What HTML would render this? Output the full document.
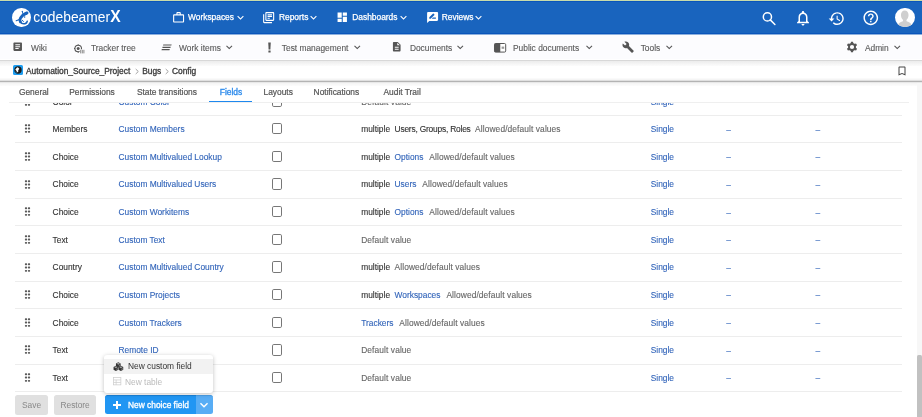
<!DOCTYPE html>
<html><head><meta charset="utf-8"><title>Fields</title>
<style>
*{box-sizing:border-box;margin:0;padding:0}
html,body{width:922px;height:417px;overflow:hidden;background:#fff;font-family:"Liberation Sans",sans-serif;position:relative}
#root{position:absolute;left:0;top:0;width:922px;height:417px;overflow:hidden;background:#fff;will-change:transform}
.a{position:absolute;white-space:nowrap;line-height:1}
.ic{position:absolute;overflow:visible}
#topline{position:absolute;left:0;top:0;width:922px;height:1px;background:#c8dbab}
#hdr{position:absolute;left:0;top:1px;width:922px;height:33px;background:#1964be;border-top:1px solid #0a55bb;border-bottom:1px solid #0a55bb}
#hdrfade{position:absolute;left:0;top:34px;width:922px;height:1px;background:#8db0dd}
.ht{color:#fff;font-size:8.4px;-webkit-text-stroke:.25px #fff}
#nav{position:absolute;left:0;top:35px;width:922px;height:24px;background:#fcfcfe}
.hl{position:absolute;left:0;width:922px;height:1px}
.nt{color:#5a5a5a;font-size:8.4px;-webkit-text-stroke:.12px #5a5a5a}
.bt{color:#3a3a3a;font-size:8.4px;-webkit-text-stroke:.3px #3a3a3a}
.tt{color:#555;font-size:8.4px;-webkit-text-stroke:.2px #555}
.tt.act{color:#2f8cec;-webkit-text-stroke:.35px #2f8cec}
.row{position:absolute;left:0;width:922px;height:27.65px}
.row span{position:absolute;top:1.2px;line-height:27.65px;font-size:8.4px;white-space:nowrap;color:#333;-webkit-text-stroke-width:.12px}
.row .ds span{position:static;margin-right:4.5px}
.ty{left:52.6px}
.nm{left:118.5px;color:#3365ba!important}
.ds{left:361.2px}
.row .l{color:#3365ba!important;margin-right:5.9px!important}
.row .g{color:#666!important;letter-spacing:.1px}
.row .u{letter-spacing:-.2px}
.sg{left:650.7px;color:#3365ba!important}
.dash{color:#3365ba!important;-webkit-text-stroke:.15px #3365ba;margin-top:.4px}
.row .cb{position:absolute;left:271.8px;top:8.2px;width:10.7px;height:11.2px;border:1.3px solid #777;border-radius:1.8px}
.sep2{position:absolute;left:15px;width:887px;height:1px;background:#ededed}
.row .dh{position:absolute;left:24px;top:9.3px}
#tabbar{position:absolute;left:9px;top:86px;width:900px;height:17px;background:#fff;border-bottom:1px solid #efefef}
#tabul{position:absolute;left:208.8px;top:100.6px;width:43.2px;height:1.9px;background:#1e88ee}
.btn{top:394.6px;height:20px;line-height:20px;text-align:center;background:#e0e0e0;border-radius:2.5px;color:#888;font-size:8.4px}
#bluebtn{left:104.5px;top:394.8px;width:91.5px;height:19.7px;background:#2196f3;border-radius:2.5px 0 0 2.5px;border-top:1px solid #1b85dc}
#bluedd{left:196px;top:394.8px;width:17.2px;height:19.7px;background:#58adf5;border-radius:0 2.5px 2.5px 0;border-top:1px solid #4ca0e8}
.bbt{color:#fff;font-size:8.4px;-webkit-text-stroke:.3px #fff}
#popup{left:104px;top:355.2px;width:109.2px;height:37.7px;background:#fff;border-radius:3px;box-shadow:0 1px 4px rgba(0,0,0,.25)}
#pophl{position:absolute;left:0;top:3.6px;width:100%;height:15.2px;background:#f2f2f2}
.pt{color:#333;font-size:8.4px}
#sb{position:absolute;left:916.5px;top:83px;width:5.5px;height:334px;background:#f7f7f7}
#sbthumb{position:absolute;left:917px;top:355px;width:5px;height:62px;background:#c1c1c1;border-radius:1.5px 1.5px 0 0}
</style></head><body><div id="root">
<div id="topline"></div><div id="hdr"></div><div id="hdrfade"></div>
<div class="a" style="left:12.2px;top:7.6px;width:18.9px;height:19.6px;border-radius:50%;background:#fff"></div>
<svg class="ic" style="left:10.5px;top:5.8px" width="22" height="23" viewBox="0 0 22 23"><g fill="none" stroke="#1964be" stroke-linecap="round" stroke-linejoin="round"><path d="M15.2 7.3 C13.2 8 10.5 10 9.3 12.4 C8.6 13.6 8.6 14.8 9.4 15.8" stroke-width="2.9"/><path d="M9.4 15.8 C10.2 17.2 12 18 14 17.6 C15.2 17.3 16 16.5 16.2 15.3" stroke-width="1.6"/><path d="M12.2 8.6 L11.3 5.5" stroke-width="1"/><path d="M9 13.2 L5.2 14.7" stroke-width="1.1"/><path d="M11.3 14.2 L12.4 15.5" stroke-width="1"/></g><g fill="#1964be"><ellipse cx="15.3" cy="7.2" rx="2.3" ry="1.6" transform="rotate(-20 15.3 7.2)"/><circle cx="13.6" cy="11.1" r=".75"/><circle cx="11.3" cy="5.3" r=".6"/></g></svg>
<div class="a " style="left:33.3px;top:8.9px;color:#fff;font-size:13.8px">codebeamer<span style="font-weight:bold;font-size:15.6px;margin-left:.2px">X</span></div>
<svg class="ic" style="left:171.5px;top:10.5px" width="13.2" height="13.2" viewBox="0 0 24 24" ><g fill="#fff"><path d="M14 6V4h-4v2h4zM4 8v11h16V8H4zm16-2c1.11 0 2 .89 2 2v11c0 1.11-.89 2-2 2H4c-1.11 0-2-.89-2-2l.01-11c0-1.11.88-2 1.99-2h4V4c0-1.11.89-2 2-2h4c1.11 0 2 .89 2 2v2h4z"/></g></svg>
<div class="a ht" style="left:188px;top:13.1px;">Workspaces</div>
<svg class="ic" style="left:233.75px;top:11.25px" width="13" height="13" viewBox="0 0 24 24" ><g fill="#fff"><path d="M16.59 8.59L12 13.17 7.41 8.59 6 10l6 6 6-6z"/></g></svg>
<svg class="ic" style="left:262.3px;top:10.9px" width="13.3" height="13.3" viewBox="0 0 24 24" ><g fill="#fff"><path d="M4 6H2v14c0 1.1.9 2 2 2h14v-2H4V6zm16-4H8c-1.1 0-2 .9-2 2v12c0 1.1.9 2 2 2h12c1.1 0 2-.9 2-2V4c0-1.1-.9-2-2-2zm0 14H8V4h12v12zM10 9h8v2h-8zm0 3h4v2h-4zm0-6h8v2h-8z"/></g></svg>
<div class="a ht" style="left:279px;top:13.1px;">Reports</div>
<svg class="ic" style="left:307.45px;top:11.25px" width="13" height="13" viewBox="0 0 24 24" ><g fill="#fff"><path d="M16.59 8.59L12 13.17 7.41 8.59 6 10l6 6 6-6z"/></g></svg>
<svg class="ic" style="left:336px;top:11.3px" width="12.5" height="12.5" viewBox="0 0 24 24" ><g fill="#fff"><path d="M3 13h8V3H3v10zm0 8h8v-6H3v6zm10 0h8V11h-8v10zm0-18v6h8V3h-8z"/></g></svg>
<div class="a ht" style="left:352.3px;top:13.1px;">Dashboards</div>
<svg class="ic" style="left:396.75px;top:11.25px" width="13" height="13" viewBox="0 0 24 24" ><g fill="#fff"><path d="M16.59 8.59L12 13.17 7.41 8.59 6 10l6 6 6-6z"/></g></svg>
<svg class="ic" style="left:425.6px;top:10.8px" width="13.2" height="13.2" viewBox="0 0 24 24" ><g fill="#fff"><path d="M20 2H4c-1.1 0-1.99.9-1.99 2L2 22l4-4h14c1.1 0 2-.9 2-2V4c0-1.1-.9-2-2-2zM6 14v-2.47l6.88-6.88c.2-.2.51-.2.71 0l1.77 1.77c.2.2.2.51 0 .71L8.47 14H6zm12 0h-7.5l2-2H18v2z"/></g></svg>
<div class="a ht" style="left:441.8px;top:13.1px;">Reviews</div>
<svg class="ic" style="left:472.05px;top:11.25px" width="13" height="13" viewBox="0 0 24 24" ><g fill="#fff"><path d="M16.59 8.59L12 13.17 7.41 8.59 6 10l6 6 6-6z"/></g></svg>
<svg class="ic" style="left:760px;top:9.5px" width="17" height="17" viewBox="0 0 17 17" ><g fill="none" stroke="#fff" stroke-width="1.5"><circle cx="7.4" cy="6.9" r="4.1"/><path d="M10.3 9.9l4.6 4.6" stroke-linecap="round"/></g></svg>
<svg class="ic" style="left:794px;top:9.2px" width="18" height="18" viewBox="0 0 24 24" ><g fill="#fff"><path d="M12 22c1.1 0 2-.9 2-2h-4c0 1.1.89 2 2 2zm6-6v-5c0-3.07-1.64-5.64-4.5-6.32V4c0-.83-.67-1.5-1.5-1.5s-1.5.67-1.5 1.5v.68C7.63 5.36 6 7.92 6 11v5l-2 2v1h16v-1l-2-2zm-2 1H8v-6c0-2.48 1.51-4.5 4-4.5s4 2.02 4 4.5v6z"/></g></svg>
<svg class="ic" style="left:827.5px;top:9.6px" width="17.2" height="17.2" viewBox="0 0 24 24" ><g fill="#fff"><path d="M13 3c-4.97 0-9 4.03-9 9H1l3.89 3.89.07.14L9 12H6c0-3.87 3.13-7 7-7s7 3.13 7 7-3.13 7-7 7c-1.93 0-3.68-.79-4.94-2.06l-1.42 1.42C8.27 19.99 10.51 21 13 21c4.97 0 9-4.03 9-9s-4.03-9-9-9zm-1 5v5l4.28 2.54.72-1.21-3.5-2.08V8H12z"/></g></svg>
<svg class="ic" style="left:862.3px;top:9.2px" width="17.6" height="17.6" viewBox="0 0 24 24" ><g fill="#fff"><path d="M11 18h2v-2h-2v2zm1-16C6.48 2 2 6.48 2 12s4.48 10 10 10 10-4.48 10-10S17.52 2 12 2zm0 18c-4.41 0-8-3.59-8-8s3.59-8 8-8 8 3.59 8 8-3.59 8-8 8zm0-14c-2.21 0-4 1.79-4 4h2c0-1.1.9-2 2-2s2 .9 2 2c0 2-3 1.75-3 5h2c0-2.25 3-2.5 3-5 0-2.21-1.79-4-4-4z"/></g></svg>
<div class="a" style="left:895px;top:7.8px;width:19.5px;height:19.5px;border-radius:50%;background:#fff;overflow:hidden"><svg width="19.5" height="19.5" viewBox="0 0 20 20" style="position:absolute;left:0;top:0"><g fill="#cfcfcf"><path d="M10 2.6c2.3 0 3.9 1.9 3.9 4.6 0 2.2-.9 4.1-2.2 5l.2 1.3c2.9.6 5.3 2.4 5.6 5.5L17.6 20H2.4l.1-1c.3-3.1 2.7-4.9 5.6-5.5l.2-1.3c-1.3-.9-2.2-2.8-2.2-5 0-2.7 1.6-4.6 3.9-4.6z"/></g></svg></div>
<div id="nav"></div><div class="hl" style="top:60px;background:#d8d8d8"></div><div class="hl" style="top:61px;height:5px;background:linear-gradient(#ececec,#fcfcfc)"></div>
<svg class="ic" style="left:12.3px;top:41px" width="11.4" height="11.4" viewBox="0 0 24 24" ><g fill="#555"><path d="M19 3H5c-1.1 0-2 .9-2 2v14c0 1.1.9 2 2 2h14c1.1 0 2-.9 2-2V5c0-1.1-.9-2-2-2zm-5 14H7v-2h7v2zm3-4H7v-2h10v2zm0-4H7V7h10v2z"/></g></svg>
<div class="a nt" style="left:31px;top:43.5px;">Wiki</div>
<svg class="ic" style="left:72.5px;top:43.5px" width="12" height="11" viewBox="0 0 12 11" ><circle cx="5.2" cy="4.5" r="3.3" fill="none" stroke="#555" stroke-width="1.1"/><circle cx="5.2" cy="4.5" r="1.5" fill="#555"/><path d="M5.2 0.3v1M1 4.5h1M5.2 7.8v1" stroke="#555" stroke-width="1"/><rect x="6.6" y="5.3" width="4.9" height="4.4" fill="#fcfcfe"/><g fill="#8a8a8a"><rect x="7.2" y="5.8" width="1" height="3.6"/><rect x="8.8" y="5.8" width="1" height="3.6"/><rect x="10.4" y="5.8" width="1" height="3.6"/></g></svg>
<div class="a nt" style="left:90.9px;top:43.5px;">Tracker tree</div>
<svg class="ic" style="left:161px;top:44.1px" width="11" height="7" viewBox="0 0 11 7" ><g fill="#555"><path d="M2.3 .5h8.4l-.4 1.1H2z"/><path d="M1.6 2.8h8.2l-.4 1.1H1.3z"/><path d="M.8 5.1h8l-.4 1.1H.5z"/></g></svg>
<div class="a nt" style="left:179.1px;top:43.5px;">Work items</div>
<svg class="ic" style="left:222.7px;top:40.6px" width="12.5" height="12.5" viewBox="0 0 24 24" ><g fill="#555"><path d="M16.59 8.59L12 13.17 7.41 8.59 6 10l6 6 6-6z"/></g></svg>
<svg class="ic" style="left:266.5px;top:41.6px" width="5" height="11" viewBox="0 0 5 11" ><g fill="#555"><path d="M1.25 .6h2.5l-.35 7H1.6z"/><rect x="1.4" y="8.5" width="2.2" height="2.1" rx=".3"/></g></svg>
<div class="a nt" style="left:281.8px;top:43.5px;">Test management</div>
<svg class="ic" style="left:351.2px;top:40.6px" width="12.5" height="12.5" viewBox="0 0 24 24" ><g fill="#555"><path d="M16.59 8.59L12 13.17 7.41 8.59 6 10l6 6 6-6z"/></g></svg>
<svg class="ic" style="left:391px;top:40.8px" width="11.5" height="11.5" viewBox="0 0 24 24" ><g fill="#555"><path d="M14 2H6c-1.1 0-1.99.9-1.99 2L4 20c0 1.1.89 2 1.99 2H18c1.1 0 2-.9 2-2V8l-6-6zm2 16H8v-2h8v2zm0-4H8v-2h8v2zm-3-5V3.5L18.5 9H13z"/></g></svg>
<div class="a nt" style="left:409.9px;top:43.5px;">Documents</div>
<svg class="ic" style="left:454.1px;top:40.6px" width="12.5" height="12.5" viewBox="0 0 24 24" ><g fill="#555"><path d="M16.59 8.59L12 13.17 7.41 8.59 6 10l6 6 6-6z"/></g></svg>
<svg class="ic" style="left:494px;top:42.6px" width="12.2" height="9.6" viewBox="0 0 12.2 9.6" ><rect x=".5" y=".5" width="11.2" height="8.6" rx="1.2" fill="#fff" stroke="#555" stroke-width="1"/><rect x=".5" y=".5" width="5.8" height="8.6" fill="#555"/><rect x="7.6" y="3.6" width="2.6" height="2.2" fill="#999"/></svg>
<div class="a nt" style="left:513px;top:43.5px;">Public documents</div>
<svg class="ic" style="left:582.5px;top:40.6px" width="12.5" height="12.5" viewBox="0 0 24 24" ><g fill="#555"><path d="M16.59 8.59L12 13.17 7.41 8.59 6 10l6 6 6-6z"/></g></svg>
<svg class="ic" style="left:621.5px;top:40.8px" width="12.3" height="12.3" viewBox="0 0 24 24" ><g fill="#555" transform="translate(0,0)"><path d="M22.7 19l-9.1-9.1c.9-2.3.4-5-1.5-6.9-2-2-5-2.4-7.4-1.3L9 6 6 9 1.6 4.7C.4 7.1.9 10.1 2.9 12.1c1.9 1.9 4.6 2.4 6.9 1.5l9.1 9.1c.4.4 1 .4 1.4 0l2.3-2.3c.5-.4.5-1.1.1-1.4z"/></g></svg>
<div class="a nt" style="left:640.7px;top:43.5px;">Tools</div>
<svg class="ic" style="left:663.2px;top:40.6px" width="12.5" height="12.5" viewBox="0 0 24 24" ><g fill="#555"><path d="M16.59 8.59L12 13.17 7.41 8.59 6 10l6 6 6-6z"/></g></svg>
<svg class="ic" style="left:846px;top:40.9px" width="12" height="12" viewBox="-6 -6 12 12" ><g fill="#555"><rect x="-1.15" y="-5.3" width="2.3" height="2.2" rx=".4" transform="rotate(0)"/><rect x="-1.15" y="-5.3" width="2.3" height="2.2" rx=".4" transform="rotate(60)"/><rect x="-1.15" y="-5.3" width="2.3" height="2.2" rx=".4" transform="rotate(120)"/><rect x="-1.15" y="-5.3" width="2.3" height="2.2" rx=".4" transform="rotate(180)"/><rect x="-1.15" y="-5.3" width="2.3" height="2.2" rx=".4" transform="rotate(240)"/><rect x="-1.15" y="-5.3" width="2.3" height="2.2" rx=".4" transform="rotate(300)"/></g><circle r="3.05" fill="none" stroke="#555" stroke-width="1.9"/></svg>
<div class="a nt" style="left:864.9px;top:43.5px;">Admin</div>
<svg class="ic" style="left:890.8px;top:40.6px" width="12.5" height="12.5" viewBox="0 0 24 24" ><g fill="#555"><path d="M16.59 8.59L12 13.17 7.41 8.59 6 10l6 6 6-6z"/></g></svg>
<div class="hl" style="top:78px;background:#fafafa"></div><div class="hl" style="top:79px;background:#f5f5f5"></div><div class="hl" style="top:80px;background:#e0e0e0"></div><div class="hl" style="top:81px;background:#b3b3b3"></div><div class="hl" style="top:82px;background:#e8e8e8"></div><div class="hl" style="top:83px;height:3px;background:linear-gradient(#f4f4f4,#fcfcfc)"></div>
<div class="a" style="left:13.3px;top:65.4px;width:9.8px;height:9.8px;background:#1e9df0;border-radius:1.5px"></div>
<svg class="ic" style="left:14.2px;top:66.3px" width="8" height="8" viewBox="0 0 8 8" ><circle cx="4" cy="4" r="3.7" fill="#1a1a1a"/><path d="M3.2 1.2c.8.3 1.6.6 2 1.4.1.8-.4 1.3-1 1.4l.2 1.4L3 6.5 2.6 5 1.3 3.6z" fill="#fff"/><path d="M1 5.6c.5.6 1 1 1.8 1.2" stroke="#1e9df0" stroke-width=".5" fill="none"/></svg>
<div class="a bt" style="left:26px;top:67.2px;">Automation_Source_Project</div>
<svg class="ic" style="left:133.8px;top:68px" width="6" height="7" viewBox="0 0 6 7" ><path d="M1.7 1l2.6 2.5-2.6 2.5" fill="none" stroke="#999" stroke-width=".9"/></svg>
<div class="a bt" style="left:142.2px;top:67.2px;">Bugs</div>
<svg class="ic" style="left:163.6px;top:68px" width="6" height="7" viewBox="0 0 6 7" ><path d="M1.7 1l2.6 2.5-2.6 2.5" fill="none" stroke="#999" stroke-width=".9"/></svg>
<div class="a bt" style="left:172px;top:67.2px;">Config</div>
<svg class="ic" style="left:895.5px;top:64.5px" width="12" height="12" viewBox="0 0 24 24" ><g fill="#444"><path d="M17 3H7c-1.1 0-1.99.9-1.99 2L5 21l7-3 7 3V5c0-1.1-.9-2-2-2zm0 15l-5-2.18L7 18V5h10v13z"/></g></svg>
<div class="row" style="top:87.35px"><svg class="dh" width="8" height="10" viewBox="0 0 8 10"><g fill="#5a5a5a"><rect x=".9" y=".3" width="2.2" height="1.9" rx=".7"/><rect x="3.9" y=".3" width="2.2" height="1.9" rx=".7"/><rect x=".9" y="3.6" width="2.2" height="1.9" rx=".7"/><rect x="3.9" y="3.6" width="2.2" height="1.9" rx=".7"/><rect x=".9" y="6.9" width="2.2" height="1.9" rx=".7"/><rect x="3.9" y="6.9" width="2.2" height="1.9" rx=".7"/></g></svg><span class="ty">Color</span><span class="nm">Custom Color</span><i class="cb"></i><span class="ds"><span class="g">Default value</span></span><span class="sg">Single</span></div>
<div class="sep2" style="top:115px"></div>
<div class="row" style="top:115.00px"><svg class="dh" width="8" height="10" viewBox="0 0 8 10"><g fill="#5a5a5a"><rect x=".9" y=".3" width="2.2" height="1.9" rx=".7"/><rect x="3.9" y=".3" width="2.2" height="1.9" rx=".7"/><rect x=".9" y="3.6" width="2.2" height="1.9" rx=".7"/><rect x="3.9" y="3.6" width="2.2" height="1.9" rx=".7"/><rect x=".9" y="6.9" width="2.2" height="1.9" rx=".7"/><rect x="3.9" y="6.9" width="2.2" height="1.9" rx=".7"/></g></svg><span class="ty">Members</span><span class="nm">Custom Members</span><i class="cb"></i><span class="ds"><span class="d">multiple</span><span class="d u">Users, Groups, Roles</span><span class="g">Allowed/default values</span></span><span class="sg">Single</span><span class="dash" style="left:726.3px">&ndash;</span><span class="dash" style="left:815.6px">&ndash;</span></div>
<div class="sep2" style="top:142px"></div>
<div class="row" style="top:142.65px"><svg class="dh" width="8" height="10" viewBox="0 0 8 10"><g fill="#5a5a5a"><rect x=".9" y=".3" width="2.2" height="1.9" rx=".7"/><rect x="3.9" y=".3" width="2.2" height="1.9" rx=".7"/><rect x=".9" y="3.6" width="2.2" height="1.9" rx=".7"/><rect x="3.9" y="3.6" width="2.2" height="1.9" rx=".7"/><rect x=".9" y="6.9" width="2.2" height="1.9" rx=".7"/><rect x="3.9" y="6.9" width="2.2" height="1.9" rx=".7"/></g></svg><span class="ty">Choice</span><span class="nm">Custom Multivalued Lookup</span><i class="cb"></i><span class="ds"><span class="d">multiple</span><span class="l">Options</span><span class="g">Allowed/default values</span></span><span class="sg">Single</span><span class="dash" style="left:726.3px">&ndash;</span><span class="dash" style="left:815.6px">&ndash;</span></div>
<div class="sep2" style="top:170px"></div>
<div class="row" style="top:170.30px"><svg class="dh" width="8" height="10" viewBox="0 0 8 10"><g fill="#5a5a5a"><rect x=".9" y=".3" width="2.2" height="1.9" rx=".7"/><rect x="3.9" y=".3" width="2.2" height="1.9" rx=".7"/><rect x=".9" y="3.6" width="2.2" height="1.9" rx=".7"/><rect x="3.9" y="3.6" width="2.2" height="1.9" rx=".7"/><rect x=".9" y="6.9" width="2.2" height="1.9" rx=".7"/><rect x="3.9" y="6.9" width="2.2" height="1.9" rx=".7"/></g></svg><span class="ty">Choice</span><span class="nm">Custom Multivalued Users</span><i class="cb"></i><span class="ds"><span class="d">multiple</span><span class="l">Users</span><span class="g">Allowed/default values</span></span><span class="sg">Single</span><span class="dash" style="left:726.3px">&ndash;</span><span class="dash" style="left:815.6px">&ndash;</span></div>
<div class="sep2" style="top:198px"></div>
<div class="row" style="top:197.95px"><svg class="dh" width="8" height="10" viewBox="0 0 8 10"><g fill="#5a5a5a"><rect x=".9" y=".3" width="2.2" height="1.9" rx=".7"/><rect x="3.9" y=".3" width="2.2" height="1.9" rx=".7"/><rect x=".9" y="3.6" width="2.2" height="1.9" rx=".7"/><rect x="3.9" y="3.6" width="2.2" height="1.9" rx=".7"/><rect x=".9" y="6.9" width="2.2" height="1.9" rx=".7"/><rect x="3.9" y="6.9" width="2.2" height="1.9" rx=".7"/></g></svg><span class="ty">Choice</span><span class="nm">Custom Workitems</span><i class="cb"></i><span class="ds"><span class="d">multiple</span><span class="l">Options</span><span class="g">Allowed/default values</span></span><span class="sg">Single</span><span class="dash" style="left:726.3px">&ndash;</span><span class="dash" style="left:815.6px">&ndash;</span></div>
<div class="sep2" style="top:225px"></div>
<div class="row" style="top:225.60px"><svg class="dh" width="8" height="10" viewBox="0 0 8 10"><g fill="#5a5a5a"><rect x=".9" y=".3" width="2.2" height="1.9" rx=".7"/><rect x="3.9" y=".3" width="2.2" height="1.9" rx=".7"/><rect x=".9" y="3.6" width="2.2" height="1.9" rx=".7"/><rect x="3.9" y="3.6" width="2.2" height="1.9" rx=".7"/><rect x=".9" y="6.9" width="2.2" height="1.9" rx=".7"/><rect x="3.9" y="6.9" width="2.2" height="1.9" rx=".7"/></g></svg><span class="ty">Text</span><span class="nm">Custom Text</span><i class="cb"></i><span class="ds"><span class="g">Default value</span></span><span class="sg">Single</span><span class="dash" style="left:726.3px">&ndash;</span><span class="dash" style="left:815.6px">&ndash;</span></div>
<div class="sep2" style="top:253px"></div>
<div class="row" style="top:253.25px"><svg class="dh" width="8" height="10" viewBox="0 0 8 10"><g fill="#5a5a5a"><rect x=".9" y=".3" width="2.2" height="1.9" rx=".7"/><rect x="3.9" y=".3" width="2.2" height="1.9" rx=".7"/><rect x=".9" y="3.6" width="2.2" height="1.9" rx=".7"/><rect x="3.9" y="3.6" width="2.2" height="1.9" rx=".7"/><rect x=".9" y="6.9" width="2.2" height="1.9" rx=".7"/><rect x="3.9" y="6.9" width="2.2" height="1.9" rx=".7"/></g></svg><span class="ty">Country</span><span class="nm">Custom Multivalued Country</span><i class="cb"></i><span class="ds"><span class="d">multiple</span><span class="g">Allowed/default values</span></span><span class="sg">Single</span><span class="dash" style="left:726.3px">&ndash;</span><span class="dash" style="left:815.6px">&ndash;</span></div>
<div class="sep2" style="top:281px"></div>
<div class="row" style="top:280.90px"><svg class="dh" width="8" height="10" viewBox="0 0 8 10"><g fill="#5a5a5a"><rect x=".9" y=".3" width="2.2" height="1.9" rx=".7"/><rect x="3.9" y=".3" width="2.2" height="1.9" rx=".7"/><rect x=".9" y="3.6" width="2.2" height="1.9" rx=".7"/><rect x="3.9" y="3.6" width="2.2" height="1.9" rx=".7"/><rect x=".9" y="6.9" width="2.2" height="1.9" rx=".7"/><rect x="3.9" y="6.9" width="2.2" height="1.9" rx=".7"/></g></svg><span class="ty">Choice</span><span class="nm">Custom Projects</span><i class="cb"></i><span class="ds"><span class="d">multiple</span><span class="l">Workspaces</span><span class="g">Allowed/default values</span></span><span class="sg">Single</span><span class="dash" style="left:726.3px">&ndash;</span><span class="dash" style="left:815.6px">&ndash;</span></div>
<div class="sep2" style="top:308px"></div>
<div class="row" style="top:308.55px"><svg class="dh" width="8" height="10" viewBox="0 0 8 10"><g fill="#5a5a5a"><rect x=".9" y=".3" width="2.2" height="1.9" rx=".7"/><rect x="3.9" y=".3" width="2.2" height="1.9" rx=".7"/><rect x=".9" y="3.6" width="2.2" height="1.9" rx=".7"/><rect x="3.9" y="3.6" width="2.2" height="1.9" rx=".7"/><rect x=".9" y="6.9" width="2.2" height="1.9" rx=".7"/><rect x="3.9" y="6.9" width="2.2" height="1.9" rx=".7"/></g></svg><span class="ty">Choice</span><span class="nm">Custom Trackers</span><i class="cb"></i><span class="ds"><span class="l">Trackers</span><span class="g">Allowed/default values</span></span><span class="sg">Single</span><span class="dash" style="left:726.3px">&ndash;</span><span class="dash" style="left:815.6px">&ndash;</span></div>
<div class="sep2" style="top:336px"></div>
<div class="row" style="top:336.20px"><svg class="dh" width="8" height="10" viewBox="0 0 8 10"><g fill="#5a5a5a"><rect x=".9" y=".3" width="2.2" height="1.9" rx=".7"/><rect x="3.9" y=".3" width="2.2" height="1.9" rx=".7"/><rect x=".9" y="3.6" width="2.2" height="1.9" rx=".7"/><rect x="3.9" y="3.6" width="2.2" height="1.9" rx=".7"/><rect x=".9" y="6.9" width="2.2" height="1.9" rx=".7"/><rect x="3.9" y="6.9" width="2.2" height="1.9" rx=".7"/></g></svg><span class="ty">Text</span><span class="nm">Remote ID</span><i class="cb"></i><span class="ds"><span class="g">Default value</span></span><span class="sg">Single</span><span class="dash" style="left:726.3px">&ndash;</span><span class="dash" style="left:815.6px">&ndash;</span></div>
<div class="sep2" style="top:364px"></div>
<div class="row" style="top:363.85px"><svg class="dh" width="8" height="10" viewBox="0 0 8 10"><g fill="#5a5a5a"><rect x=".9" y=".3" width="2.2" height="1.9" rx=".7"/><rect x="3.9" y=".3" width="2.2" height="1.9" rx=".7"/><rect x=".9" y="3.6" width="2.2" height="1.9" rx=".7"/><rect x="3.9" y="3.6" width="2.2" height="1.9" rx=".7"/><rect x=".9" y="6.9" width="2.2" height="1.9" rx=".7"/><rect x="3.9" y="6.9" width="2.2" height="1.9" rx=".7"/></g></svg><span class="ty">Text</span><span class="nm">Remote Name</span><i class="cb"></i><span class="ds"><span class="g">Default value</span></span><span class="sg">Single</span><span class="dash" style="left:726.3px">&ndash;</span><span class="dash" style="left:815.6px">&ndash;</span></div>
<div class="sep2" style="top:391px"></div>
<div id="tabbar"></div><div id="tabul"></div>
<div class="a tt" style="left:18.9px;top:87.7px;">General</div>
<div class="a tt" style="left:69.2px;top:87.7px;">Permissions</div>
<div class="a tt" style="left:136.9px;top:87.7px;">State transitions</div>
<div class="a tt act" style="left:219.8px;top:87.7px;">Fields</div>
<div class="a tt" style="left:263.5px;top:87.7px;">Layouts</div>
<div class="a tt" style="left:313.6px;top:87.7px;">Notifications</div>
<div class="a tt" style="left:383.5px;top:87.7px;">Audit Trail</div>
<div class="a btn" style="left:15px;width:33px;">Save</div>
<div class="a btn" style="left:54.4px;width:41.4px;">Restore</div>
<div class="a" id="bluebtn"></div><div class="a" id="bluedd"></div>
<div class="a" style="left:113px;top:404.2px;width:7.9px;height:1.4px;background:#fff"></div><div class="a" style="left:116.3px;top:400.9px;width:1.4px;height:7.9px;background:#fff"></div>
<div class="a bbt" style="left:128px;top:400.8px;">New choice field</div>
<svg class="ic" style="left:195.8px;top:396.7px" width="16" height="16" viewBox="0 0 24 24" ><g fill="#fff"><path d="M16.59 8.59L12 13.17 7.41 8.59 6 10l6 6 6-6z"/></g></svg>
<div class="a" id="popup"><div id="pophl"></div></div>
<svg class="ic" style="left:112.6px;top:362.2px" width="11" height="9.5" viewBox="0 0 11 9.5" ><path d="M5.3 0.19999999999999973L7.64 1.5499999999999998L7.64 4.25L5.3 5.6L2.96 4.25L2.96 1.5499999999999998z" fill="#333"/><path d="M5.3 0.8999999999999997L7.04 1.5499999999999998L5.3 2.6999999999999997L3.56 1.5499999999999998z" fill="#aaa"/><path d="M5.8 3.1999999999999997L7.14 2.15L7.14 4.05L5.8 5.0z" fill="#777"/><path d="M2.9 3.7L5.24 5.050000000000001L5.24 7.75L2.9 9.100000000000001L0.56 7.75L0.56 5.050000000000001z" fill="#333"/><path d="M2.9 4.4L4.64 5.050000000000001L2.9 6.2L1.16 5.050000000000001z" fill="#aaa"/><path d="M3.4 6.7L4.74 5.65L4.74 7.55L3.4 8.500000000000002z" fill="#777"/><path d="M7.9 3.7L10.24 5.050000000000001L10.24 7.75L7.9 9.100000000000001L5.56 7.75L5.56 5.050000000000001z" fill="#333"/><path d="M7.9 4.4L9.64 5.050000000000001L7.9 6.2L6.16 5.050000000000001z" fill="#aaa"/><path d="M8.4 6.7L9.74 5.65L9.74 7.55L8.4 8.500000000000002z" fill="#777"/></svg>
<div class="a pt" style="left:128px;top:362.1px;">New custom field</div>
<svg class="ic" style="left:112.8px;top:377.3px" width="8.4" height="8.4" viewBox="0 0 8 8" ><g fill="none" stroke="#ccc" stroke-width=".7"><rect x=".5" y=".5" width="7" height="7"/><path d="M.5 2.8h7M.5 5.2h7M3 2.8v4.7"/></g></svg>
<div class="a pt" style="left:125px;top:377.9px;color:#bbb">New table</div>
<div id="sb"></div><div id="sbthumb"></div>
</div></body></html>
